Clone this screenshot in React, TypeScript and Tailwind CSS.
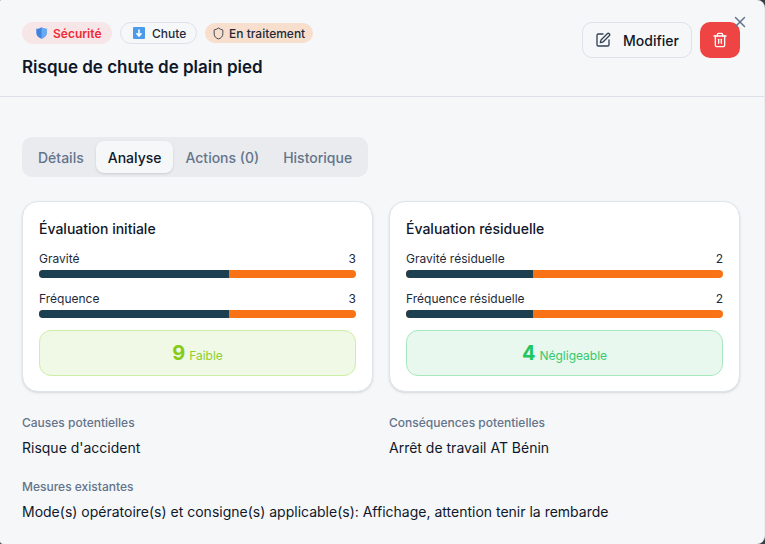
import { SquarePen, Trash2, Shield, X } from "lucide-react";

function Bar({ label, value, pct }: { label: string; value: number; pct: string }) {
  return (
    <div>
      <div className="flex justify-between text-[12px] leading-[16px] text-[#1e293b] mb-[3px]">
        <span>{label}</span>
        <span>{value}</span>
      </div>
      <div className="flex h-[8px] rounded-full overflow-hidden bg-[#f97316]">
        <div className={pct + " bg-[#1c3f52]"} />
      </div>
    </div>
  );
}

function Card({ title, rows, score, text, box }: { title: string; rows: { l: string; v: number; p: string }[]; score: number; text: string; box: string }) {
  return (
    <div className="bg-white rounded-[16px] border border-[#dfe3ea] shadow-sm px-[16px] pt-[17px] pb-[15px]">
      <div className="text-[14px] leading-[20px] font-medium text-[#0f172a] mb-[12px]">{title}</div>
      <div className="flex flex-col gap-[13px] mb-[12px]">
        {rows.map((r) => (
          <Bar key={r.l} label={r.l} value={r.v} pct={r.p} />
        ))}
      </div>
      <div className={"h-[46px] rounded-[12px] border flex items-baseline justify-center gap-[4px] pt-[8px] " + box}>
        <span className="text-[20px] font-bold leading-[28px]">{score}</span>
        <span className="text-[12px] leading-[16px] opacity-90">{text}</span>
      </div>
    </div>
  );
}

export default function App() {
  return (
    <div className="h-[544px] w-[765px] overflow-hidden bg-[#3a3d42]">
      <div className="relative h-[544px] w-[765px] overflow-hidden bg-[#f6f7f9] font-['Inter',sans-serif] border-r border-[#e9ebf0] rounded-tr-[8px] rounded-br-[8px] rounded-bl-[3px] rounded-tl-[1px]">
        <button className="absolute right-[15px] top-[13px] text-[#64748b]">
          <X size={18} />
        </button>
        <div className="flex justify-between border-b border-[#dde1e9] h-[97px] pt-[22px] px-[22px] pr-[24px]">
          <div>
            <div className="flex gap-[8px] items-center">
              <span className="h-[22px] w-[90px] rounded-full bg-[#f7e6e8] text-[#ef2b35] text-[12px] font-semibold flex items-center pl-[14px] gap-[6px]">
                <svg width="11" height="12" viewBox="0 0 11 12"><path d="M5.5 0.3 C7 1.3 9 1.8 10.7 1.8 V6 C10.7 8.8 8.3 10.8 5.5 11.8 C2.7 10.8 0.3 8.8 0.3 6 V1.8 C2 1.8 4 1.3 5.5 0.3 Z" fill="#3f83e0" /><path d="M5.5 0.3 C7 1.3 9 1.8 10.7 1.8 V6 C10.7 8.8 8.3 10.8 5.5 11.8 Z" fill="#6aa9ef" /></svg>
                <span className="pt-[1px]">Sécurité</span>
              </span>
              <span className="h-[22px] w-[77px] rounded-full border border-[#dde1e9] text-[#1e293b] text-[12px] font-medium flex items-center pl-[12px] gap-[7px]">
                <svg width="12" height="12" viewBox="0 0 12 12"><rect width="12" height="12" rx="1" fill="#4a9bea" /><path d="M6 2.5V8M3.5 6.2 6 9l2.5-2.8" stroke="#fff" strokeWidth="1.6" fill="none" /></svg>
                <span className="pt-[1px]">Chute</span>
              </span>
              <span className="h-[20px] w-[108px] rounded-full bg-[#f8dfcd] text-[#1e293b] text-[12px] font-medium flex items-center pl-[7px] gap-[4px]">
                <Shield size={13} strokeWidth={1.5} />
                <span className="pt-[1px]">En traitement</span>
              </span>
            </div>
            <h1 className="mt-[9px] text-[17px] leading-[28px] font-semibold text-[#0f172a]">Risque de chute de plain pied</h1>
          </div>
          <div className="flex gap-[8px]">
            <button className="h-[36px] w-[110px] rounded-[10px] border border-[#dde1e9] text-[14px] font-medium text-[#0f172a] flex items-center pl-[12px] gap-[12px]">
              <SquarePen size={16} className="text-[#334155]" />
              Modifier
            </button>
            <button className="h-[36px] w-[40px] rounded-[10px] bg-[#ef4444] text-white flex items-center justify-center">
              <Trash2 size={16} />
            </button>
          </div>
        </div>
        <div className="px-[22px] pt-[40px]">
          <div className="inline-flex h-[40px] items-center rounded-[10px] bg-[#e9ebef] px-[4px] text-[14px] font-medium text-[#64748b]">
            <span className="px-[12px]">Détails</span>
            <span className="px-[12px] h-[32px] flex items-center rounded-[8px] bg-[#f6f7f9] text-[#0f172a] shadow-sm">Analyse</span>
            <span className="px-[12px]">Actions (0)</span>
            <span className="px-[12px]">Historique</span>
          </div>
          <div className="grid grid-cols-2 gap-[16px] mt-[24px] w-[718px]">
            <Card
              title="Évaluation initiale"
              rows={[{ l: "Gravité", v: 3, p: "w-[60%]" }, { l: "Fréquence", v: 3, p: "w-[60%]" }]}
              score={9}
              text="Faible"
              box="bg-[#f0f8e6] border-[#cdeea6] text-[#84cc16]"
            />
            <Card
              title="Évaluation résiduelle"
              rows={[{ l: "Gravité résiduelle", v: 2, p: "w-[40%]" }, { l: "Fréquence résiduelle", v: 2, p: "w-[40%]" }]}
              score={4}
              text="Négligeable"
              box="bg-[#e8f8ee] border-[#a8e8bf] text-[#22c55e]"
            />
          </div>
          <div className="grid grid-cols-2 gap-[16px] mt-[23px] w-[718px]">
            <div>
              <div className="text-[12px] leading-[16px] font-medium text-[#64748b]">Causes potentielles</div>
              <div className="mt-[7px] text-[14px] leading-[20px] text-[#0f172a]">Risque d'accident</div>
            </div>
            <div>
              <div className="text-[12px] leading-[16px] font-medium text-[#64748b]">Conséquences potentielles</div>
              <div className="mt-[7px] text-[14px] leading-[20px] text-[#0f172a]">Arrêt de travail AT Bénin</div>
            </div>
          </div>
          <div className="mt-[21px] text-[12px] leading-[16px] font-medium text-[#64748b]">Mesures existantes</div>
          <div className="mt-[7px] text-[14px] leading-[20px] text-[#0f172a]">Mode(s) opératoire(s) et consigne(s) applicable(s): Affichage, attention tenir la rembarde</div>
        </div>
      </div>
    </div>
  );
}
